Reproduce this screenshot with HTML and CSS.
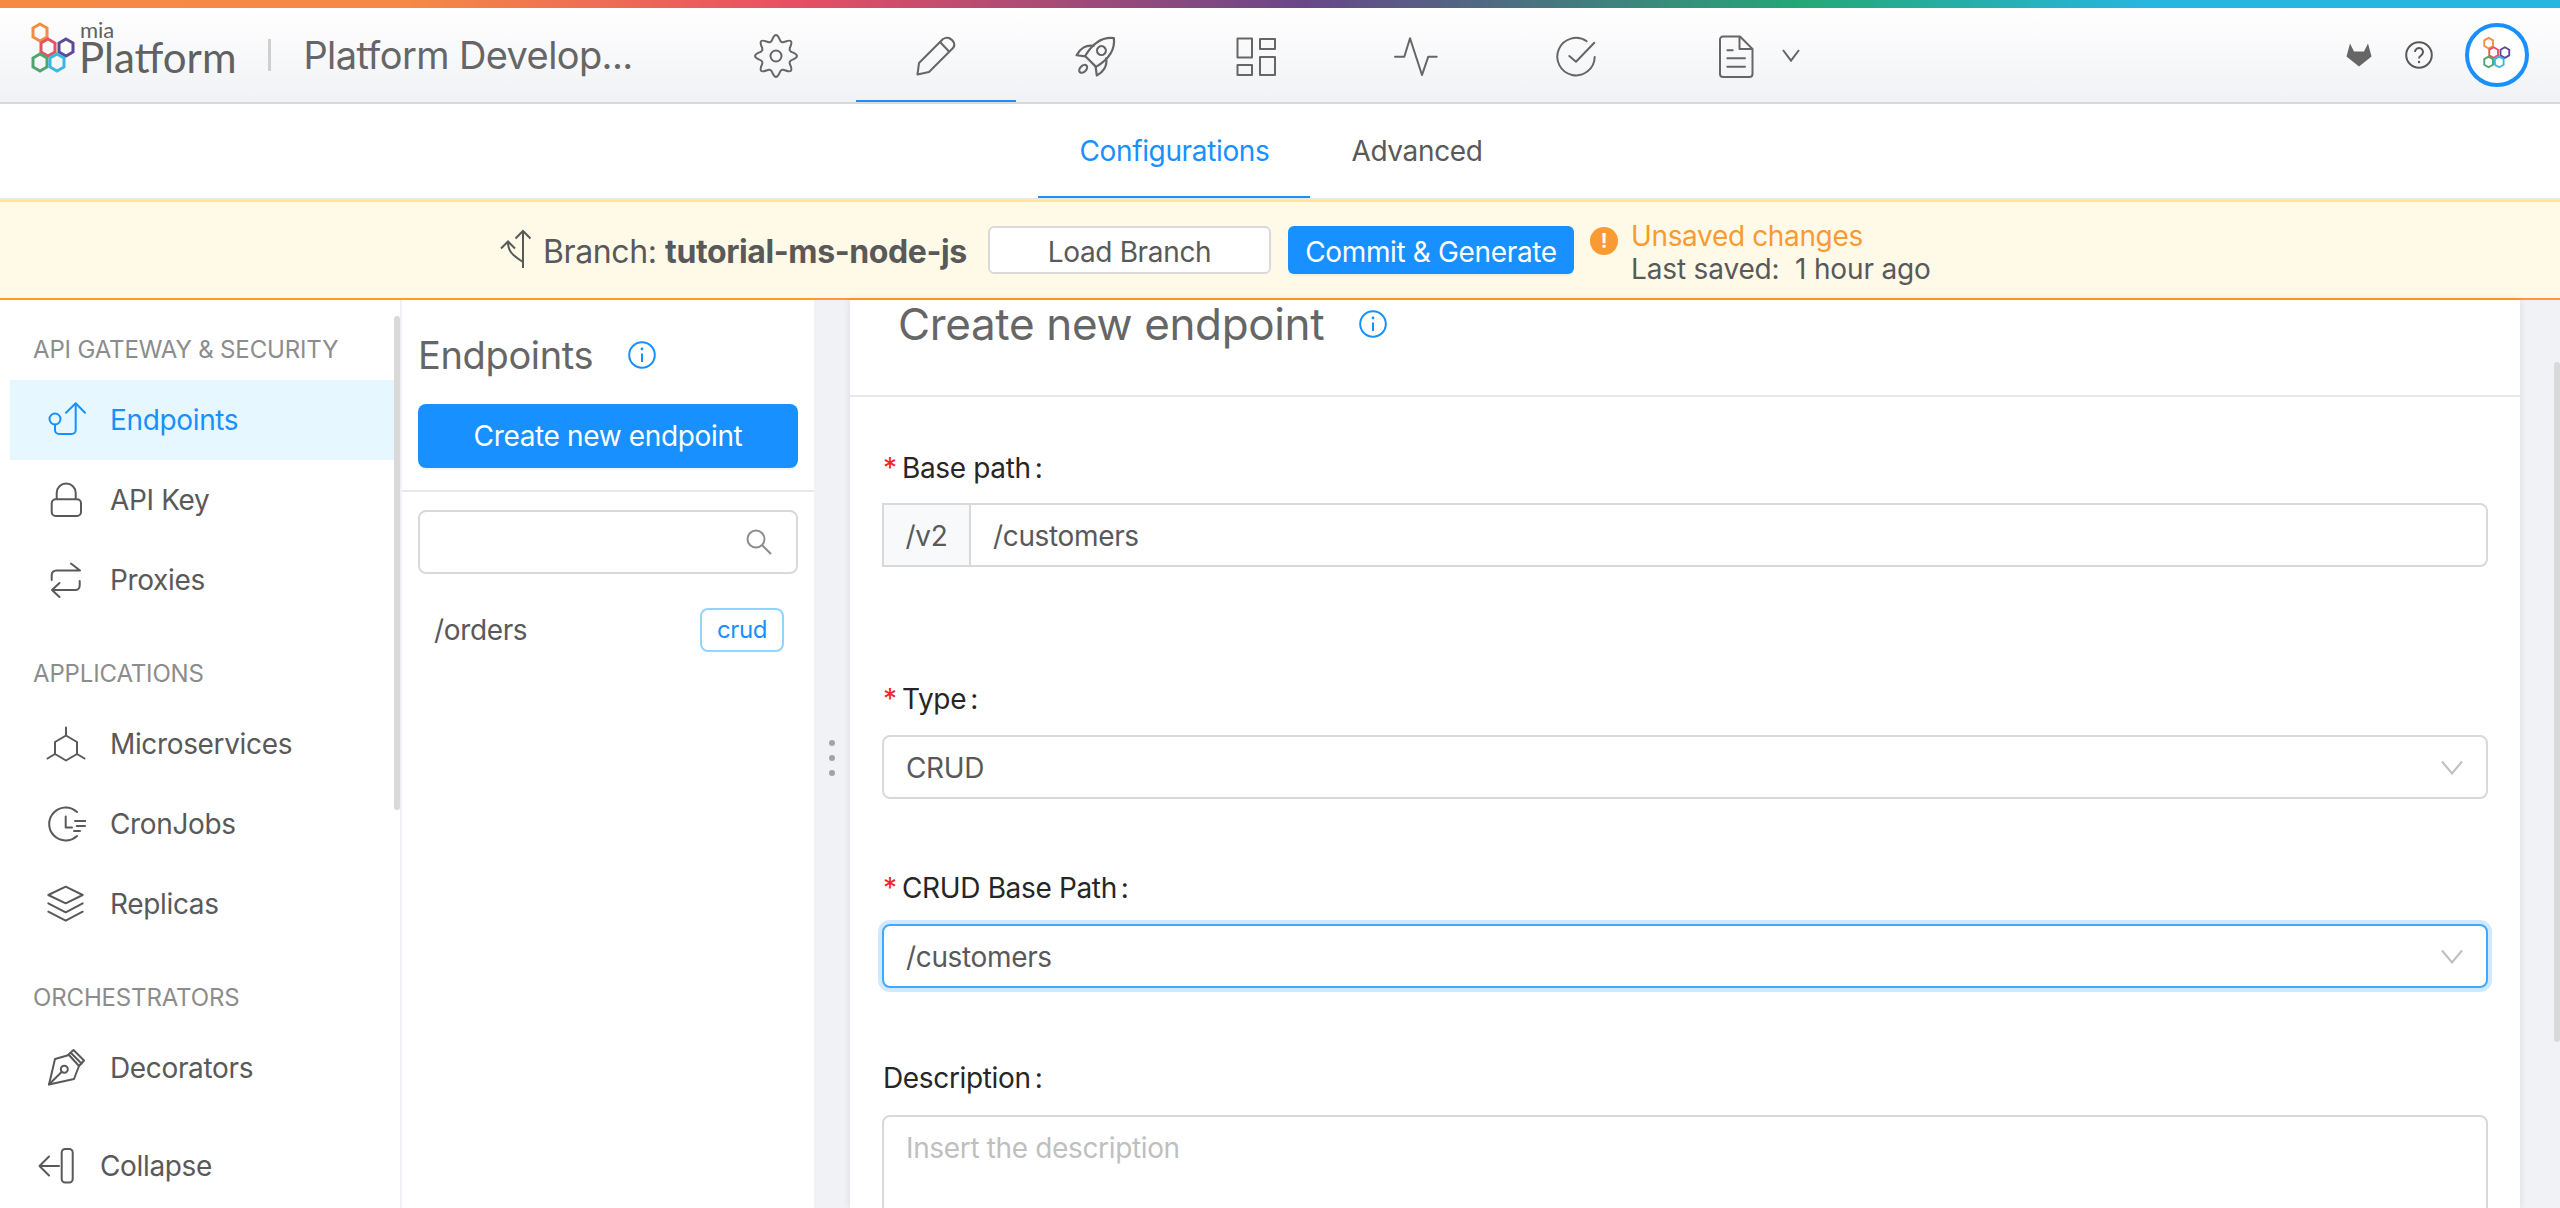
FILE: index.html
```html
<!DOCTYPE html>
<html lang="en">
<head>
<meta charset="utf-8">
<title>Platform Development</title>
<link rel="stylesheet" href="styles.css">
</head>
<body>
<svg class="defs" width="0" height="0" aria-hidden="true">
  <symbol id="mia-mark" viewBox="0 0 64 64">
    <polygon class="hex hex-orange" points="17,3 24,7 24,16 17,20 10,16 10,7"/>
    <polygon class="hex hex-red" points="25,18 32,22 32,31 25,35 18,31 18,22"/>
    <polygon class="hex hex-purple" points="43,18 50,22 50,31 43,35 36,31 36,22"/>
    <polygon class="hex hex-green" points="17,33 24,37 24,46 17,50 10,46 10,37"/>
    <polygon class="hex hex-blue" points="34,33 41,37 41,46 34,50 27,46 27,37"/>
  </symbol>
</svg>
<div class="rainbow"></div>
<header class="topbar">
  <div class="brand">
    <svg class="brand-mark"><use href="#mia-mark"/></svg>
    <div class="brand-word"><span class="brand-mia">mia</span><span class="brand-platform">Platform</span></div>
    <span class="brand-sep"></span>
    <span class="project">Platform Develop...</span>
  </div>
  <nav class="topnav">
    <a class="topnav-item"><svg class="ico" viewBox="-22 -22 44 44"><path d="M-3.41 -17.16Q0 -24.8 3.41 -17.16Q4.9 -11.83 9.72 -14.55Q17.54 -17.54 14.55 -9.72Q11.83 -4.9 17.16 -3.41Q24.8 0 17.16 3.41Q11.83 4.9 14.55 9.72Q17.54 17.54 9.72 14.55Q4.9 11.83 3.41 17.16Q0 24.8 -3.41 17.16Q-4.9 11.83 -9.72 14.55Q-17.54 17.54 -14.55 9.72Q-11.83 4.9 -17.16 3.41Q-24.8 0 -17.16 -3.41Q-11.83 -4.9 -14.55 -9.72Q-17.54 -17.54 -9.72 -14.55Q-4.9 -11.83 -3.41 -17.16Z"/><circle r="5.5"/></svg></a>
    <a class="topnav-item is-active"><svg class="ico" viewBox="0 0 44 44"><path d="M3.5 40.5L5 29L29 5Q32 3 35 4Q39 6 40 9Q41 12 39 14L15 38Z"/><path d="M26.5 8.5L35 17.5"/></svg></a>
    <a class="topnav-item"><svg class="ico" viewBox="2 2 40 40"><g transform="rotate(45 22 22)"><path d="M22 -1C31 6 32 17 29 29H15C12 17 13 6 22 -1Z"/><circle cx="22" cy="15" r="4"/><path d="M14 17C8 21 7 28 9 34L15.5 29"/><path d="M30 17C36 21 37 28 35 34L28.5 29"/><ellipse cx="22" cy="38.5" rx="2.8" ry="4.2"/></g></svg></a>
    <a class="topnav-item"><svg class="ico" viewBox="0 0 44 44"><rect x="3.5" y="4.5" width="14.5" height="19"/><rect x="26" y="5" width="15" height="10"/><rect x="3.5" y="31" width="14.5" height="10"/><rect x="26" y="23" width="15" height="18"/></svg></a>
    <a class="topnav-item"><svg class="ico" viewBox="0 0 44 44"><path d="M1 22.7H10.3L16 4.3L28 41L34.3 22.7H42.7"/></svg></a>
    <a class="topnav-item"><svg class="ico" viewBox="0 0 44 44"><path d="M32.7 7.3A18.7 18.7 0 1 0 40.7 23"/><path d="M15.3 22L22 27.7L40.3 8.7"/></svg></a>
    <a class="topnav-item topnav-more"><svg class="ico" viewBox="0 0 44 44"><path d="M9 2.5H26L38.5 15V40a3 3 0 0 1-3 3H9a3 3 0 0 1-3-3V5.5a3 3 0 0 1 3-3Z"/><path d="M25.5 3V15H38"/><path d="M13.3 16.3H18.7M13.3 24.3H31M13.3 32.7H31"/></svg><svg class="ico-caret" viewBox="0 0 20 14"><path d="M2 2L10 12.7L18 2"/></svg></a>
  </nav>
  <div class="top-actions">
    <svg class="gitlab" viewBox="0 0 26 24"><path d="M13 23.5L0.5 13.5L4 0.5L8 8.5H18L22 0.5L25.5 13.5Z"/></svg>
    <svg class="help" viewBox="0 0 28 28"><circle cx="14" cy="14" r="12.8"/><path d="M10 11a4 4 0 1 1 6.2 3.3C14.8 15.3 14 16 14 17.6"/><circle class="help-dot" cx="14" cy="21" r="1.2"/></svg>
    <span class="avatar"><svg class="avatar-mark"><use href="#mia-mark"/></svg></span>
  </div>
</header>
<div class="subtabs">
  <a class="subtab is-active">Configurations</a>
  <a class="subtab">Advanced</a>
</div>
<div class="banner">
  <svg class="branch-ico" viewBox="0 0 34 40"><path d="M24 39V2M16.5 9.5L24 2L31.5 9.5"/><path d="M9 13C9 22 13 26 24 33"/><path d="M2 19.5L9 12.5L16 19.5"/></svg>
  <span class="branch-text">Branch: <b>tutorial-ms-node-js</b></span>
  <button class="btn btn-ghost">Load Branch</button>
  <button class="btn btn-primary">Commit &amp; Generate</button>
  <span class="warn-dot">!</span>
  <div class="save-state">
    <span class="save-title">Unsaved changes</span>
    <span class="save-time">Last saved:&nbsp; 1 hour ago</span>
  </div>
</div>
<main class="workspace">
  <aside class="sidebar">
    <span class="side-thumb"></span>
    <nav class="side-nav">
      <h4 class="side-title side-title-first">API GATEWAY &amp; SECURITY</h4>
      <a class="side-item is-active"><svg class="side-ico" viewBox="0 0 40 40"><circle cx="9" cy="19" r="5.5"/><path d="M9 24.5V30a4 4 0 0 0 4 4H25.7a4 4 0 0 0 4-4V4"/><path d="M20 12.7L29.7 3.3L39 12.7"/></svg>Endpoints</a>
      <a class="side-item"><svg class="side-ico" viewBox="0 0 40 40"><rect x="5.7" y="19.3" width="29.3" height="16.7" rx="4"/><path d="M10.7 19V13a9.5 9.5 0 0 1 19 0V19"/></svg>API Key</a>
      <a class="side-item"><svg class="side-ico" viewBox="0 0 40 40"><path d="M5.7 20V15a4.5 4.5 0 0 1 4.5-4.5H34L25 3.5"/><path d="M33.7 21V25.5a4.5 4.5 0 0 1-4.5 4.5H6L13.5 23M6 30L13.5 37"/></svg>Proxies</a>
      <h4 class="side-title">APPLICATIONS</h4>
      <a class="side-item"><svg class="side-ico" viewBox="0 0 40 40"><path d="M20 11.5L31 18V30L20 36.5L9 30V18Z"/><path d="M20 11.5V3.5M31 30L38.5 34.5M9 30L1.5 34.5"/></svg>Microservices</a>
      <a class="side-item"><svg class="side-ico" viewBox="0 0 40 40"><path d="M31 8A16.5 16.5 0 1 0 31 32"/><path d="M19.7 12.5V23.5H26"/><path d="M29 17H41.3M30.7 22H39M28 27H34"/></svg>CronJobs</a>
      <a class="side-item"><svg class="side-ico" viewBox="0 0 40 40"><path d="M2.3 11L19.7 2.7L36.7 11L19.7 19.3Z"/><path d="M2.3 19.3L19.7 28.3L36.7 19.3"/><path d="M2.3 27.7L19.7 36.7L36.7 27.7"/></svg>Replicas</a>
      <h4 class="side-title">ORCHESTRATORS</h4>
      <a class="side-item"><svg class="side-ico" viewBox="0 0 40 40"><path d="M3 36.5L9 11L23 7L33 18L28 31Z"/><path d="M22 7L27.5 2L38 12.5L33 18"/><path d="M25 5L35.5 15.5"/><path d="M3 36.5L15.8 23.8"/><circle cx="18.3" cy="21.3" r="3.5"/></svg>Decorators</a>
    </nav>
    <a class="side-collapse"><svg class="side-ico" viewBox="0 0 40 40"><path d="M1.5 20H21M11 10.5L1.5 20L11 29.5"/><rect x="23.7" y="3" width="11" height="33.5" rx="3.5"/></svg>Collapse</a>
  </aside>
  <section class="list-panel">
    <div class="list-head">
      <div class="list-title-row">
        <h2 class="list-title">Endpoints</h2>
        <svg class="info" viewBox="0 0 28 28"><circle cx="14" cy="14" r="12.8"/><path d="M14 12.5V21"/><circle class="info-dot" cx="14" cy="8" r="1.4"/></svg>
      </div>
      <button class="btn-create">Create new endpoint</button>
    </div>
    <div class="list-body">
      <div class="search">
        <svg class="search-ico" viewBox="0 0 26 26"><circle cx="10" cy="10" r="8.5"/><path d="M16.2 16.2L25 25"/></svg>
      </div>
      <div class="list-row">
        <span class="list-path">/orders</span>
        <span class="tag">crud</span>
      </div>
    </div>
  </section>
  <div class="gutter"><span class="dot"></span><span class="dot"></span><span class="dot"></span></div>
  <section class="card">
    <div class="card-head">
      <h1 class="card-title">Create new endpoint</h1>
      <svg class="info" viewBox="0 0 28 28"><circle cx="14" cy="14" r="12.8"/><path d="M14 12.5V21"/><circle class="info-dot" cx="14" cy="8" r="1.4"/></svg>
    </div>
    <form class="form">
      <div class="field field-path">
        <label class="label"><span class="req">*</span>Base path<span class="colon">:</span></label>
        <div class="addon-input"><span class="addon">/v2</span><span class="addon-value">/customers</span></div>
      </div>
      <div class="field field-type">
        <label class="label"><span class="req">*</span>Type<span class="colon">:</span></label>
        <div class="select"><span class="select-value">CRUD</span><svg class="select-caret" viewBox="0 0 22 15"><path d="M1 1.5L11 13.5L21 1.5"/></svg></div>
      </div>
      <div class="field field-crud">
        <label class="label"><span class="req">*</span>CRUD Base Path<span class="colon">:</span></label>
        <div class="select is-focus"><span class="select-value">/customers</span><svg class="select-caret" viewBox="0 0 22 15"><path d="M1 1.5L11 13.5L21 1.5"/></svg></div>
      </div>
      <div class="field field-desc">
        <label class="label">Description<span class="colon">:</span></label>
        <div class="textarea">Insert the description</div>
      </div>
    </form>
  </section>
  <div class="page-rail"><span class="page-thumb"></span></div>
</main>
</body>
</html>
```

FILE: styles.css
```css
* { box-sizing: border-box; }
html, body { margin: 0; height: 100%; }
body {
  display: flex;
  flex-direction: column;
  height: 100vh;
  overflow: hidden;
  background: #f0f2f5;
  font-family: Inter, "Liberation Sans", sans-serif;
  font-size: 28px;
  letter-spacing: -0.35px;
  color: #595959;
}
.defs { position: absolute; }
.hex { fill: none; stroke-width: 3; }
.hex-orange { stroke: #f48c45; }
.hex-red { stroke: #e0565f; }
.hex-purple { stroke: #5c4a99; }
.hex-green { stroke: #4fa56f; }
.hex-blue { stroke: #3ab7e2; }

.rainbow {
  flex: none;
  height: 8px;
  background: linear-gradient(90deg, #f58b42 0%, #f48a46 16%, #e84f63 31%, #684789 51%, #24a877 70.5%, #27b6e0 84%, #27b6e0 100%);
}
.topbar {
  flex: none;
  height: 96px;
  display: flex;
  border-bottom: 2px solid #d9d9d9;
  background: linear-gradient(180deg, #ffffff 0%, #f1f2f5 100%);
}
.brand { width: 696px; flex: none; display: flex; align-items: center; padding-left: 24px; }
.brand-mark { width: 64px; height: 64px; margin-top: -4px; flex: none; margin-left: -1px; margin-right: -8px; }
.brand-word { display: flex; flex-direction: column; font-family: Lato, sans-serif; color: #616161; letter-spacing: 0; line-height: 1; margin-top: -13px; }
.brand-mia { font-size: 22px; line-height: 16px; margin-left: 1px; }
.brand-platform { font-size: 42px; line-height: 38px; }
.brand-sep { width: 3px; height: 32px; background: #cfcfcf; margin: 0 32px 0 32px; flex: none; }
.project {
  font-size: 38px;
  letter-spacing: -0.6px;
  color: #666;
  white-space: nowrap;
}
.topnav { display: flex; }
.topnav-item {
  width: 160px;
  height: 94px;
  padding-top: 1px;
  display: flex;
  align-items: center;
  justify-content: center;
  position: relative;
}
.topnav-item.is-active { box-shadow: inset 0 -2px 0 #1890ff; }
.ico { width: 44px; height: 44px; fill: none; stroke: #666; stroke-width: 2; stroke-linejoin: round; stroke-linecap: round; }
.ico-caret {
  position: absolute;
  left: 125px;
  top: 40px;
  width: 20px;
  height: 14px;
  fill: none;
  stroke: #666;
  stroke-width: 2;
}
.top-actions { margin-left: auto; display: flex; align-items: center; padding-right: 31px; }
.gitlab { width: 26px; height: 24px; fill: #666; }
.help { width: 28px; height: 28px; margin-left: 33px; fill: none; stroke: #595959; stroke-width: 2; }
.help-dot { fill: #595959; stroke: none; }
.avatar {
  width: 64px;
  height: 64px;
  margin-left: 32px;
  border: 4px solid #1890ff;
  border-radius: 50%;
  background: #fff;
  display: flex;
  align-items: center;
  justify-content: center;
}
.avatar-mark { width: 40px; height: 40px; margin-left: 2px; margin-top: 2px; }

.subtabs {
  flex: none;
  height: 96px;
  display: flex;
  justify-content: center;
  padding-left: 2px;
  background: #fff;
  border-bottom: 2px solid #e8e8e8;
}
.subtab { height: 94px; display: flex; align-items: center; padding: 0 41px; color: #595959; font-size: 28px; }
.subtab.is-active { color: #1890ff; box-shadow: inset 0 -2px 0 #1890ff; }

.banner {
  flex: none;
  height: 100px;
  display: flex;
  align-items: center;
  padding-left: 500px;
  background: #fffae8;
  border-top: 2px solid #ffe58f;
  border-bottom: 2px solid #ff9a2e;
}
.branch-ico { width: 34px; height: 40px; flex: none; fill: none; stroke: #595959; stroke-width: 2; margin-top: -2px; margin-left: -1px; }
.branch-text { margin-left: 10px; padding-top: 2px; font-size: 32px; letter-spacing: -0.4px; color: #595959; white-space: nowrap; width: 445px; }
.branch-text b { font-weight: 700; }
.btn {
  height: 48px;
  border-radius: 6px;
  font-family: inherit;
  font-size: 28px;
  letter-spacing: inherit;
  padding: 3px 0 0;
  flex: none;
}
.btn-ghost { width: 283px; background: #fff; border: 2px solid #d9d9d9; color: #595959; }
.btn-primary { width: 286px; margin-left: 17px; background: #1890ff; border: 0; color: #fff; box-shadow: 0 2px 0 rgba(0,0,0,.04); }
.warn-dot {
  width: 28px;
  height: 28px;
  margin-left: 16px;
  margin-top: -18px;
  flex: none;
  border-radius: 50%;
  background: #fa9a32;
  color: #fff;
  font-size: 20px;
  font-weight: 700;
  line-height: 28px;
  text-align: center;
}
.save-state { display: flex; flex-direction: column; margin-left: 13px; margin-top: 6px; line-height: 33px; white-space: nowrap; }
.save-title { color: #fa9a32; }
.save-time { color: #595959; letter-spacing: -0.15px; }

.workspace { flex: 1; min-height: 0; display: flex; position: relative; }
.sidebar {
  width: 400px;
  flex: none;
  display: flex;
  flex-direction: column;
  position: relative;
  background: #fff;
  overflow: hidden;
}
.side-thumb {
  position: absolute;
  right: 0;
  top: 16px;
  width: 6px;
  height: 494px;
  background: #d9d9d9;
  border-radius: 3px;
}
.side-nav { flex: 1; min-height: 0; padding-top: 29px; }
.side-title {
  margin: 33px 0 11px;
  padding-left: 33px;
  height: 40px;
  line-height: 42px;
  font-size: 24px;
  font-weight: 400;
  letter-spacing: -0.15px;
  color: #8c8c8c;
}
.side-title-first { margin-top: 0; }
.side-item {
  height: 80px;
  margin: 0 6px 0 10px;
  padding-left: 36px;
  display: flex;
  align-items: center;
  gap: 24px;
  color: #595959;
  font-size: 28px;
}
.side-item.is-active { background: #e6f7ff; color: #1890ff; }
.side-ico { width: 40px; height: 40px; flex: none; fill: none; stroke: currentColor; stroke-width: 2; stroke-linejoin: round; stroke-linecap: round; }
.side-collapse {
  flex: none;
  height: 84px;
  padding-left: 38px;
  display: flex;
  align-items: center;
  gap: 22px;
  color: #595959;
}

.list-panel { width: 412px; margin-left: 2px; flex: none; background: #fff; }
.list-head { height: 192px; padding: 0 16px; border-bottom: 2px solid #e8e8e8; }
.list-title-row { height: 104px; display: flex; align-items: center; gap: 35px; padding-top: 6px; }
.list-title { margin: 0; font-size: 38px; font-weight: 400; color: #666; }
.info { width: 28px; height: 28px; flex: none; fill: none; stroke: #1890ff; stroke-width: 2; }
.info-dot { fill: #1890ff; stroke: none; }
.btn-create {
  width: 380px;
  height: 64px;
  border: 0;
  border-radius: 8px;
  background: #1890ff;
  color: #fff;
  font-family: inherit;
  font-size: 28px;
  letter-spacing: inherit;
  box-shadow: 0 2px 0 rgba(0,0,0,.04);
}
.list-body { padding: 18px 16px; }
.search {
  height: 64px;
  border: 2px solid #d9d9d9;
  border-radius: 8px;
  display: flex;
  align-items: center;
  justify-content: flex-end;
  padding-right: 24px;
}
.search-ico { width: 26px; height: 26px; fill: none; stroke: #8c8c8c; stroke-width: 2; }
.list-row { margin-top: 34px; height: 44px; display: flex; align-items: center; justify-content: space-between; padding: 0 14px 0 16px; }
.list-path { color: #595959; }
.tag {
  width: 84px;
  height: 44px;
  border: 2px solid #91d5ff;
  border-radius: 8px;
  color: #1890ff;
  font-size: 24px;
  line-height: 40px;
  text-align: center;
}

.gutter { width: 36px; flex: none; display: flex; flex-direction: column; align-items: center; gap: 9px; padding-top: 440px; }
.dot { width: 6px; height: 6px; border-radius: 50%; background: #a3a3a3; }

.card { width: 1670px; flex: none; display: flex; flex-direction: column; background: #fff; box-shadow: 0 0 8px rgba(0,0,0,.1); }
.card-head { flex: none; height: 97px; display: flex; align-items: flex-start; gap: 35px; padding-left: 48px; border-bottom: 2px solid #e8e8e8; }
.card-title { margin: 0; font-size: 44px; font-weight: 400; color: #666; line-height: 48px; }
.card-head .info { margin-top: 10px; }
.form { flex: 1; min-height: 0; overflow: hidden; padding: 49px 32px 0; }
.field { margin-bottom: 68px; }
.field-path { margin-bottom: 110px; }
.field-type { margin-bottom: 67px; }
.label { display: block; height: 40px; line-height: 44px; margin-bottom: 17px; padding-left: 1px; font-size: 28px; color: #262626; }
.field-type .label, .field-crud .label { margin-bottom: 18px; }
.req { color: #f5222d; margin-right: 8px; font-size: 28px; display: inline-block; width: 11px; }
.colon { margin-left: 4px; }
.addon-input { height: 64px; display: flex; border: 2px solid #d9d9d9; border-radius: 0 8px 8px 0; }
.addon { width: 87px; padding-top: 2px; display: flex; align-items: center; justify-content: center; background: #f8f9fa; border-right: 2px solid #d9d9d9; color: #595959; }
.addon-value { display: flex; align-items: center; padding: 2px 0 0 22px; }
.select {
  height: 64px;
  display: flex;
  align-items: center;
  justify-content: space-between;
  padding: 0 24px 0 22px;
  border: 2px solid #d9d9d9;
  border-radius: 8px;
  background: #fff;
}
.select.is-focus { border-color: #40a9ff; box-shadow: 0 0 0 4px rgba(24,144,255,.2); }
.select-value { padding-top: 1px; }
.select-caret { width: 22px; height: 15px; fill: none; stroke: #bfbfbf; stroke-width: 2; margin-right: -1px; }
.field-desc .label { margin-bottom: 19px; }
.textarea { height: 200px; padding: 14px 22px; border: 2px solid #d9d9d9; border-radius: 8px; color: #bfbfbf; }

.page-rail { flex: 1; position: relative; }
.page-thumb {
  position: absolute;
  right: 0;
  top: 62px;
  width: 6px;
  height: 680px;
  background: #d9d9d9;
  border-radius: 3px;
}
```
